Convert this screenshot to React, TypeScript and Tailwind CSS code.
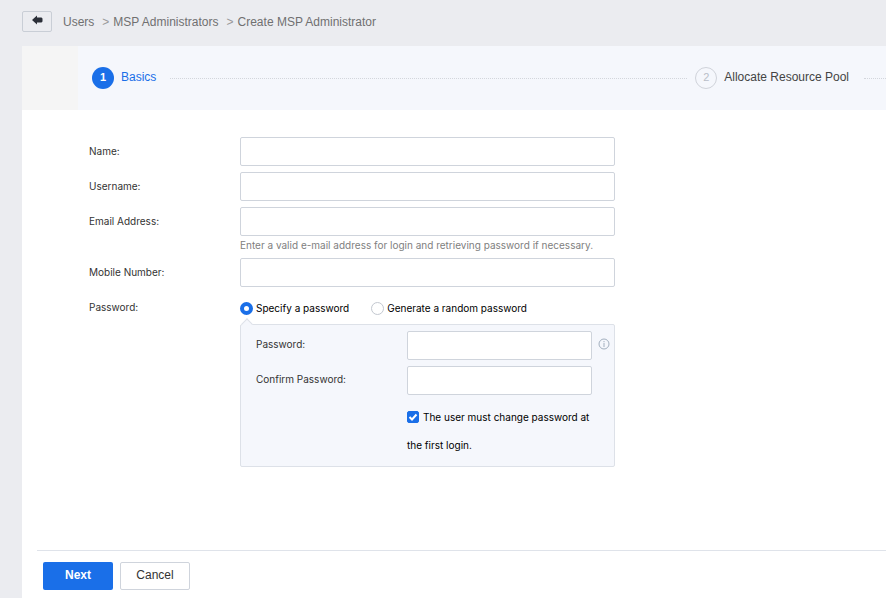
import { useState, type ReactNode } from "react";
import clsx from "clsx";

const inputClass =
  "block h-[29px] w-full rounded-[2px] border border-[#cfd4dc] bg-white px-2 text-[10px] text-[#222] outline-none focus:border-[#1a6fe8]";

function BackIcon() {
  return (
    <svg viewBox="0 0 11 10" className="h-[10px] w-[11px]" fill="#2b2f38" aria-hidden="true">
      <path d="M0 5 5 0.5V2.5h4.5l1 1v3l-1 1H5v2z" />
    </svg>
  );
}

function InfoIcon() {
  return (
    <svg viewBox="0 0 12 12" className="size-3" fill="none" stroke="#a3b0bf" aria-hidden="true">
      <circle cx="6" cy="6" r="5" />
      <path d="M6 5v4M6 3v1.2" />
    </svg>
  );
}

function Separator() {
  return <span className="ml-2 mr-1 text-[12px] text-[#999]">&gt;</span>;
}

function Breadcrumb() {
  return (
    <header className="flex h-[46px] items-start pt-[11px]">
      <button
        type="button"
        aria-label="Back"
        className="flex h-[21px] w-[30px] items-center justify-center rounded-[2px] border border-[#c9ced6] pb-1 pl-px"
      >
        <BackIcon />
      </button>
      <nav className="ml-[11px] flex h-[22px] items-center text-[12px] text-[#707070]">
        <a href="#users">Users</a>
        <Separator />
        <a href="#msp-administrators">MSP Administrators</a>
        <Separator />
        <span>Create MSP Administrator</span>
      </nav>
    </header>
  );
}

function Step({ index, title, active }: { index: number; title: string; active?: boolean }) {
  return (
    <li className="flex shrink-0 items-center gap-[7px]">
      <span
        className={clsx(
          "flex size-[22px] items-center justify-center rounded-full pb-[2px] text-[11px]",
          active ? "bg-[#1a6fe8] font-bold text-white" : "border border-[#d0d3da] text-[#b9bec8]",
        )}
      >
        {index}
      </span>
      <span className={clsx("pb-[2px] text-[12px]", active ? "text-[#1a6fe8]" : "text-[#444]")}>{title}</span>
    </li>
  );
}

function Steps() {
  return (
    <div className="flex h-16 bg-[#f5f5f5] pl-14">
      <ol className="flex flex-1 items-center bg-[#f5f7fc] pl-[14px]">
        <Step index={1} title="Basics" active />
        <li aria-hidden="true" className="ml-[14px] mr-2 flex-1 border-t border-dotted border-[#d3d6dc]" />
        <Step index={2} title="Allocate Resource Pool" />
        <li aria-hidden="true" className="ml-[15px] w-[22px] border-t border-dotted border-[#d3d6dc]" />
      </ol>
    </div>
  );
}

function Field({ id, label, type = "text", hint }: { id: string; label: string; type?: string; hint?: string }) {
  return (
    <div className="flex">
      <label htmlFor={id} className="w-[151px] shrink-0 leading-[28px]">
        {label}
      </label>
      <div className="w-full max-w-[375px]">
        <input id={id} name={id} type={type} className={inputClass} />
        {hint && <p className="mt-[2px] leading-[14px] text-[#808080]">{hint}</p>}
      </div>
    </div>
  );
}

interface RadioProps {
  checked: boolean;
  onChange: () => void;
  children: ReactNode;
}

function Radio({ checked, onChange, children }: RadioProps) {
  return (
    <label className="flex items-center gap-[3px] text-black">
      <input
        type="radio"
        name="passwordMode"
        checked={checked}
        onChange={onChange}
        className="size-[13px] appearance-none rounded-full border border-[#c3c8d0] bg-white checked:border-4 checked:border-[#1a6fe8]"
      />
      {children}
    </label>
  );
}

function PasswordPanel() {
  return (
    <div className="relative w-full rounded-[2px] border border-[#dde1e8] bg-[#f5f7fc] pb-[7px] pl-[15px] pt-[6px]">
      <span className="absolute -top-[5px] left-[2px] size-2 rotate-45 border-l border-t border-[#dde1e8] bg-[#f5f7fc]" />
      <div className="flex flex-col gap-[6px]">
        <div className="flex items-start">
          <label htmlFor="password" className="w-[151px] shrink-0 leading-[26px]">
            Password:
          </label>
          <div className="w-[185px]">
            <input id="password" name="password" type="password" className={inputClass} />
          </div>
          <button type="button" aria-label="Password rules" className="ml-[6px] mt-[7px]">
            <InfoIcon />
          </button>
        </div>
        <div className="flex items-start">
          <label htmlFor="confirm" className="w-[151px] shrink-0 leading-[26px]">
            Confirm Password:
          </label>
          <div className="w-[185px]">
            <input id="confirm" name="confirm" type="password" className={inputClass} />
          </div>
        </div>
      </div>
      <label className="ml-[151px] mt-2 block w-[194px] leading-[28px] text-black">
        <span className="relative mr-1 inline-block size-3 align-[-2px]">
          <input
            type="checkbox"
            defaultChecked
            className="peer block size-3 appearance-none rounded-[2px] border border-[#c3c8d0] bg-white checked:border-[#1a6fe8] checked:bg-[#1a6fe8]"
          />
          <svg
            viewBox="0 0 12 12"
            className="pointer-events-none absolute inset-0 hidden size-3 peer-checked:block"
            fill="none"
            stroke="#fff"
            strokeWidth="2"
            aria-hidden="true"
          >
            <path d="m2.5 6 2.5 2.5 4.5-5" />
          </svg>
        </span>
        The user must change password at the first login.
      </label>
    </div>
  );
}

export default function App() {
  const [mode, setMode] = useState<"specify" | "random">("specify");

  return (
    <div className="min-h-screen bg-[#ebecf0] pl-[22px] font-['Liberation_Sans',Arial,sans-serif]">
      <Breadcrumb />
      <main className="min-h-[552px] bg-white">
        <Steps />
        <form onSubmit={(e) => e.preventDefault()} className="text-[#333]">
          <div className="flex min-h-[440px] flex-col gap-[6px] pl-[67px] pt-[27px] font-[Inter,Arial,sans-serif] text-[10px]">
            <Field id="name" label="Name:" />
            <Field id="username" label="Username:" />
            <Field
              id="email"
              label="Email Address:"
              type="email"
              hint="Enter a valid e-mail address for login and retrieving password if necessary."
            />
            <Field id="mobile" label="Mobile Number:" type="tel" />
            <div className="flex">
              <span id="password-mode" className="w-[151px] shrink-0 leading-[28px]">
                Password:
              </span>
              <div role="radiogroup" aria-labelledby="password-mode" className="w-full max-w-[375px]">
                <div className="flex h-[31px] items-center gap-[22px]">
                  <Radio checked={mode === "specify"} onChange={() => setMode("specify")}>
                    Specify a password
                  </Radio>
                  <Radio checked={mode === "random"} onChange={() => setMode("random")}>
                    Generate a random password
                  </Radio>
                </div>
                {mode === "specify" && <PasswordPanel />}
              </div>
            </div>
          </div>
          <footer className="ml-[15px] flex gap-[7px] border-t border-[#dfe3ea] pl-[6px] pt-[11px] text-[12px]">
            <button type="submit" className="h-[28px] w-[70px] rounded-[2px] bg-[#1a6fe8] pb-[2px] font-bold text-white">
              Next
            </button>
            <button type="button" className="h-[28px] w-[70px] rounded-[2px] border border-[#cfd4dc] bg-white pb-[2px]">
              Cancel
            </button>
          </footer>
        </form>
      </main>
    </div>
  );
}
